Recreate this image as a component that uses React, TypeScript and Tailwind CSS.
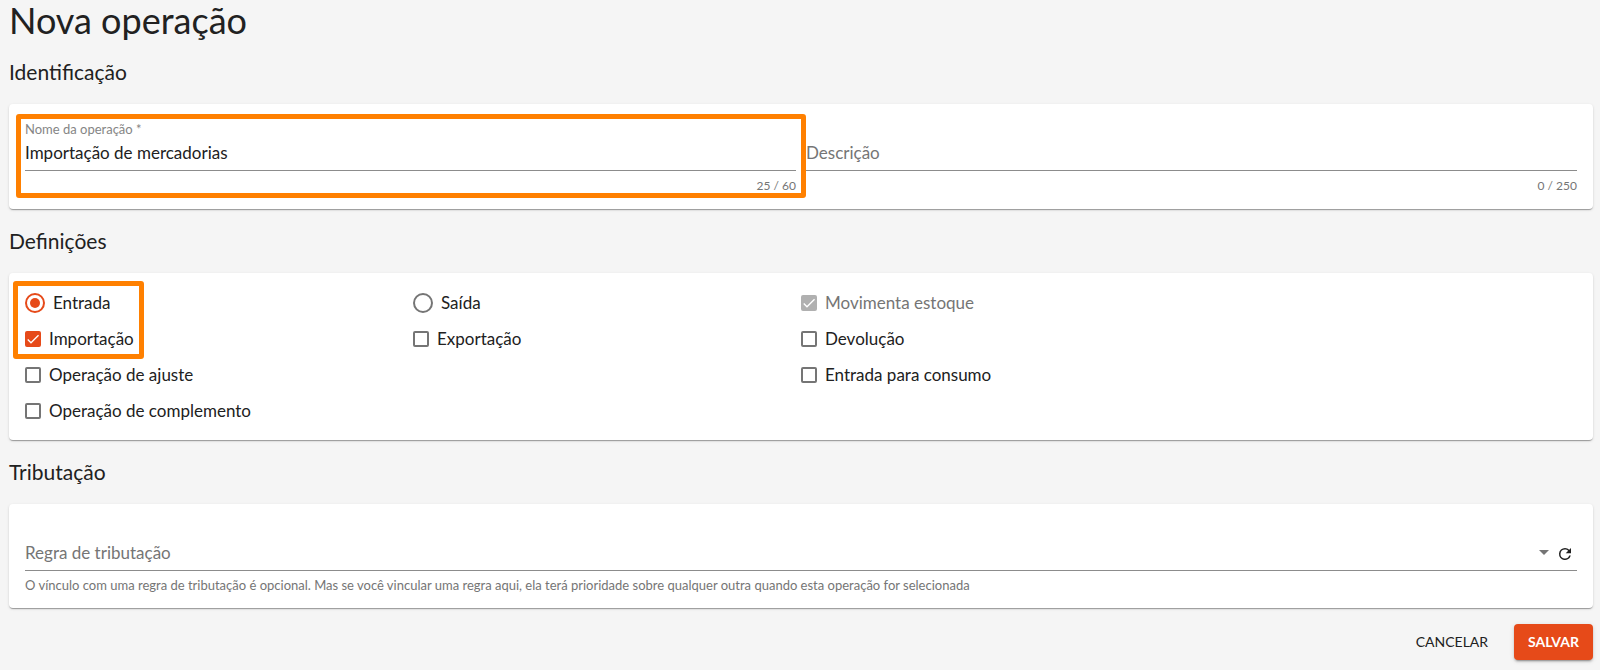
import { useState } from "react";
import type { ReactNode } from "react";

const NAME_MAX = 60;
const DESCRIPTION_MAX = 250;

function Section({ title, className = "", children }: { title: string; className?: string; children: ReactNode }) {
  return (
    <section>
      <h2 className="flex h-16 items-center text-[21px] leading-6">{title}</h2>
      <div
        className={`rounded bg-white px-4 shadow-[0_2px_1px_-1px_rgba(0,0,0,0.2),0_1px_1px_0_rgba(0,0,0,0.14),0_1px_3px_0_rgba(0,0,0,0.12)] ${className}`}
      >
        {children}
      </div>
    </section>
  );
}

type TextFieldProps = {
  id: string;
  label: string;
  value: string;
  max: number;
  required?: boolean;
  onChange: (value: string) => void;
};

function TextField({ id, label, value, max, required, onChange }: TextFieldProps) {
  return (
    <div className="relative flex-1">
      <input
        id={id}
        value={value}
        maxLength={max}
        onChange={(event) => onChange(event.target.value)}
        className="block h-9 w-full border-b border-[#8c8c8c] bg-transparent text-[17px] outline-none"
      />
      <label
        htmlFor={id}
        className={
          value
            ? "absolute -top-3.5 left-0 text-[13px] leading-4 text-[#858585]"
            : "absolute top-1 left-0 text-[17px] leading-7 text-[#757575]"
        }
      >
        {label}
        {required ? " *" : ""}
      </label>
      <p className="mt-[7px] text-right text-xs leading-4 text-[#757575]">
        {value.length} / {max}
      </p>
    </div>
  );
}

function Radio({ label, checked, onChange }: { label: string; checked: boolean; onChange: () => void }) {
  return (
    <label className="flex h-9 items-center gap-2 text-[17px]">
      <input
        type="radio"
        name="tipo"
        checked={checked}
        onChange={onChange}
        className="h-5 w-5 appearance-none rounded-full border-2 border-[#757575] checked:border-[#e64a19] checked:bg-[#e64a19] checked:bg-clip-content checked:p-[3px]"
      />
      {label}
    </label>
  );
}

function Checkbox({ label, checked = false, disabled = false }: { label: string; checked?: boolean; disabled?: boolean }) {
  return (
    <label className={`flex h-9 items-center gap-2 text-[17px] ${disabled ? "text-[#757575]" : ""}`}>
      <span className="relative h-4 w-4">
        <input
          type="checkbox"
          defaultChecked={checked}
          disabled={disabled}
          className="peer block h-4 w-4 appearance-none rounded-xs border-2 border-[#757575] checked:border-[#e64a19] checked:bg-[#e64a19] disabled:border-[#b0b0b0] disabled:bg-[#b0b0b0]"
        />
        <svg
          viewBox="0 0 24 24"
          className="pointer-events-none absolute inset-0 hidden h-4 w-4 fill-none stroke-white stroke-2 peer-checked:block"
        >
          <path d="M4.1 12.7 9 17.6 20.3 6.3" />
        </svg>
      </span>
      {label}
    </label>
  );
}

export default function App() {
  const [name, setName] = useState("Importação de mercadorias");
  const [description, setDescription] = useState("");
  const [kind, setKind] = useState("entrada");
  const [rule, setRule] = useState("");

  return (
    <main className="min-h-screen bg-[#f5f5f5] pr-[7px] pb-2 pl-[9px] font-['Lato',sans-serif] text-[#212121]">
      <h1 className="text-4xl leading-10">Nova operação</h1>

      <Section title="Identificação" className="flex gap-[10px] pt-[31px] pb-[15px]">
        <div className="relative flex-1">
          <TextField
            id="nome"
            label="Nome da operação"
            value={name}
            max={NAME_MAX}
            required
            onChange={setName}
          />
          <div className="pointer-events-none absolute -top-[21px] -right-[10px] -bottom-1 -left-[9px] rounded-[3px] border-5 border-[#ff8000]" />
        </div>
        <TextField
          id="descricao"
          label="Descrição"
          value={description}
          max={DESCRIPTION_MAX}
          onChange={setDescription}
        />
      </Section>

      <Section title="Definições" className="grid grid-cols-4 pt-3 pb-[11px]">
        <div>
          <div className="relative w-fit">
            <Radio label="Entrada" checked={kind === "entrada"} onChange={() => setKind("entrada")} />
            <Checkbox label="Importação" checked />
            <div className="pointer-events-none absolute -top-1 -right-2.5 -bottom-0.5 -left-3 rounded-[3px] border-5 border-[#ff8000]" />
          </div>
          <Checkbox label="Operação de ajuste" />
          <Checkbox label="Operação de complemento" />
        </div>
        <div>
          <Radio label="Saída" checked={kind === "saida"} onChange={() => setKind("saida")} />
          <Checkbox label="Exportação" />
        </div>
        <div>
          <Checkbox label="Movimenta estoque" checked disabled />
          <Checkbox label="Devolução" />
          <Checkbox label="Entrada para consumo" />
        </div>
      </Section>

      <Section title="Tributação" className="pt-[31px] pb-[15px]">
        <div className="relative flex h-9 items-center border-b border-[#8c8c8c]">
          <select
            id="regra"
            value={rule}
            onChange={(event) => setRule(event.target.value)}
            className="h-full flex-1 appearance-none bg-transparent text-[17px] outline-none"
          >
            <option value="" />
          </select>
          <label htmlFor="regra" className="pointer-events-none absolute top-1 left-0 text-[17px] leading-7 text-[#757575]">
            Regra de tributação
          </label>
          <svg viewBox="0 0 10 5" className="h-[5px] w-[10px] fill-[#757575]">
            <path d="M0 0h10L5 5z" />
          </svg>
          <button type="button" aria-label="Atualizar" className="mr-[3px] ml-[7px] pt-0.5">
            <svg viewBox="0 0 24 24" className="block h-[18px] w-[18px] fill-[#212121]">
              <path d="M17.65 6.35A7.96 7.96 0 0 0 12 4a8 8 0 1 0 7.73 10h-2.08A6 6 0 1 1 12 6c1.66 0 3.14.69 4.22 1.78L13 11h7V4z" />
            </svg>
          </button>
        </div>
        <p className="mt-1.5 text-[13px] leading-4 text-[#757575]">
          O vínculo com uma regra de tributação é opcional. Mas se você vincular uma regra aqui, ela terá prioridade
          sobre qualquer outra quando esta operação for selecionada
        </p>
      </Section>

      <div className="mt-4 flex justify-end gap-3 text-sm">
        <button type="button" className="h-9 rounded px-3.5">
          CANCELAR
        </button>
        <button
          type="button"
          className="h-9 rounded bg-[#e64a19] px-3.5 font-bold text-white shadow-[0_3px_1px_-2px_rgba(0,0,0,0.2),0_2px_2px_0_rgba(0,0,0,0.14),0_1px_5px_0_rgba(0,0,0,0.12)]"
        >
          SALVAR
        </button>
      </div>
    </main>
  );
}
